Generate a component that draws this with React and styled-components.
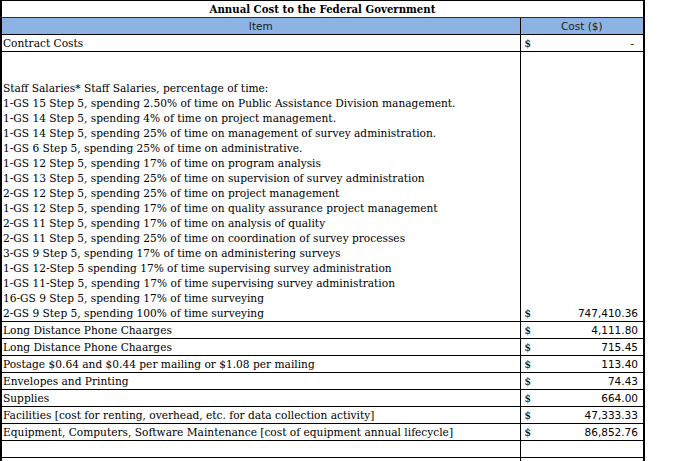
import React from 'react';
import styled, { createGlobalStyle } from 'styled-components';

const GlobalStyle = createGlobalStyle`
  html, body {
    margin: 0;
    padding: 0;
    background: #ffffff;
  }
  body {
    font-family: "DejaVu Serif Condensed", "DejaVu Serif", serif;
    font-stretch: condensed;
    color: #000;
    overflow: hidden;
  }
`;

const Sheet = styled.table`
  width: 645px;
  table-layout: fixed;
  border-collapse: collapse;
  border: 2px solid #000;
  border-top: 1px solid #000;
`;

const TitleCell = styled.th`
  height: 16px;
  padding: 0;
  font-weight: bold;
  font-size: 11.3px;
  line-height: 16px;
  text-align: center;
  border-bottom: 1px solid #1f2f4f;
`;

const HeadCell = styled.th`
  height: 16px;
  padding: 0;
  background: #8db3e2;
  font-family: "DejaVu Sans", sans-serif;
  font-stretch: normal;
  font-weight: normal;
  font-size: 10.5px;
  line-height: 16px;
  color: #1a1a1a;
  text-align: center;
  border: 1px solid #000;
  border-top: none;
`;

const ItemCell = styled.td`
  height: 16px;
  padding: 0 0 0 1px;
  font-size: 11.8px;
  line-height: ${p => (p.$tall ? '15px' : '16px')};
  white-space: nowrap;
  vertical-align: bottom;
  border: 1px solid #000;
  overflow: hidden;
`;

const CostCell = styled.td`
  padding: 0 5px 0 4px;
  vertical-align: bottom;
  border: 1px solid #000;
`;

const Money = styled.div`
  display: flex;
  justify-content: space-between;
  align-items: center;
  height: 16px;
  overflow: hidden;
`;

const Dollar = styled.span`
  font-size: 11.5px;
  line-height: 16px;
`;

const Amount = styled.span`
  font-family: "DejaVu Sans", sans-serif;
  font-stretch: normal;
  font-size: 10.5px;
  line-height: 16px;
  padding-right: ${p => (p.$dash ? '4px' : '0')};
`;

const Spacer = styled.div`
  height: 29px;
`;

const staff = [
  'Staff Salaries* Staff Salaries, percentage of time:',
  '1-GS 15 Step 5, spending 2.50% of time on Public Assistance Division management.',
  '1-GS 14 Step 5, spending 4% of time on project management.',
  '1-GS 14 Step 5, spending 25% of time on management of survey administration.',
  '1-GS 6 Step 5, spending 25% of time on administrative.',
  '1-GS 12 Step 5, spending 17% of time on program analysis',
  '1-GS 13 Step 5, spending 25% of time on supervision of survey administration',
  '2-GS 12 Step 5, spending 25% of time on project management',
  '1-GS 12 Step 5, spending 17% of time on quality assurance project management',
  '2-GS 11 Step 5, spending 17% of time on analysis of quality',
  '2-GS 11 Step 5, spending 25% of time on coordination of survey processes',
  '3-GS 9 Step 5, spending 17% of time on administering surveys',
  '1-GS 12-Step 5 spending 17% of time supervising survey administration',
  '1-GS 11-Step 5, spending 17% of time supervising survey administration',
  '16-GS 9 Step 5, spending 17% of time surveying',
  '2-GS 9 Step 5, spending 100% of time surveying',
];

const rows = [
  ['Long Distance Phone Chaarges', '4,111.80'],
  ['Long Distance Phone Chaarges', '715.45'],
  ['Postage $0.64 and $0.44 per mailing or $1.08 per mailing', '113.40'],
  ['Envelopes and Printing', '74.43'],
  ['Supplies', '664.00'],
  ['Facilities [cost for renting, overhead, etc. for data collection activity]', '47,333.33'],
  ['Equipment, Computers, Software Maintenance [cost of equipment annual lifecycle]', '86,852.76'],
];

const Cost = ({ value, dash }) => (
  <CostCell>
    <Money>
      <Dollar>$</Dollar>
      <Amount $dash={dash}>{value}</Amount>
    </Money>
  </CostCell>
);

const App = () => (
  <>
    <GlobalStyle />
    <Sheet>
      <colgroup>
        <col style={{ width: '519px' }} />
        <col />
      </colgroup>
      <thead>
        <tr>
          <TitleCell colSpan={2}>Annual Cost to the Federal Government</TitleCell>
        </tr>
        <tr>
          <HeadCell>Item</HeadCell>
          <HeadCell>Cost ($)</HeadCell>
        </tr>
      </thead>
      <tbody>
        <tr>
          <ItemCell>Contract Costs</ItemCell>
          <Cost value="-" dash />
        </tr>
        <tr>
          <ItemCell $tall>
            <Spacer />
            {staff.map((line, i) => (
              <div key={i}>{line}</div>
            ))}
          </ItemCell>
          <Cost value="747,410.36" />
        </tr>
        {rows.map(([label, value], i) => (
          <tr key={i}>
            <ItemCell>{label}</ItemCell>
            <Cost value={value} />
          </tr>
        ))}
        <tr>
          <ItemCell />
          <CostCell />
        </tr>
        <tr>
          <ItemCell />
          <CostCell />
        </tr>
      </tbody>
    </Sheet>
  </>
);

export default App;
